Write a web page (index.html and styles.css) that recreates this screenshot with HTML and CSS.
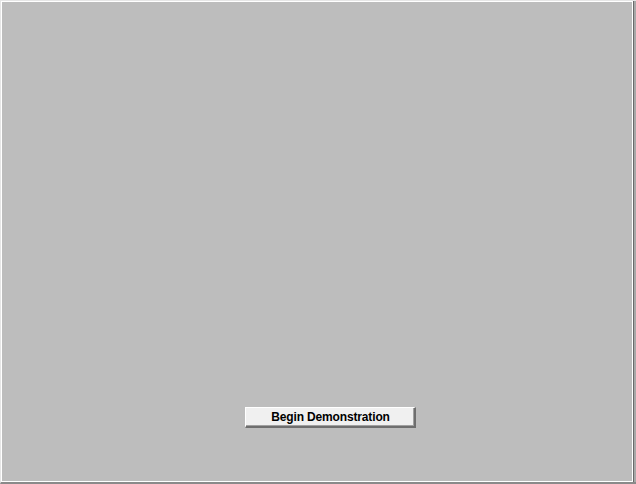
FILE: index.html
```html
<!DOCTYPE html>
<html>
<head>
<meta charset="utf-8">
<link rel="stylesheet" href="styles.css">
</head>
<body>
<div class="frame">
  <div class="panel">
    <button class="btn">Begin Demonstration</button>
  </div>
  <div class="side"></div>
</div>
</body>
</html>
```
FILE: styles.css
```css
html, body {
  margin: 0;
  padding: 0;
  background: #d4d4d4;
}
.frame {
  width: 636px;
  height: 484px;
  display: flex;
  box-sizing: border-box;
  border-top: 1px solid #e6e6e6;
  border-left: 1px solid #e6e6e6;
  border-bottom: 2px solid #8a8a8a;
}
.panel {
  width: 632px;
  box-sizing: border-box;
  border: 1px solid #ffffff;
  background: #bdbdbd;
  display: flex;
  flex-direction: column;
  justify-content: flex-end;
  align-items: flex-start;
  padding-left: 243px;
  padding-bottom: 53px;
}
.side {
  flex: 1;
  background: #a8a8a8;
  border-left: 1px solid #6a6a6a;
}
.btn {
  width: 171px;
  height: 21px;
  margin: 0;
  padding: 0 0 0 1px;
  box-sizing: border-box;
  background: #f0f0f0;
  border-top: 1px solid #ffffff;
  border-left: 1px solid #ffffff;
  border-right: 2px solid #6e6e6e;
  border-bottom: 2px solid #6e6e6e;
  box-shadow: inset -1px -1px 0 #a0a0a0;
  font-family: "Liberation Sans", Arial, sans-serif;
  font-weight: bold;
  font-size: 12px;
  letter-spacing: -0.15px;
  color: #000;
  line-height: 17px;
}
```
